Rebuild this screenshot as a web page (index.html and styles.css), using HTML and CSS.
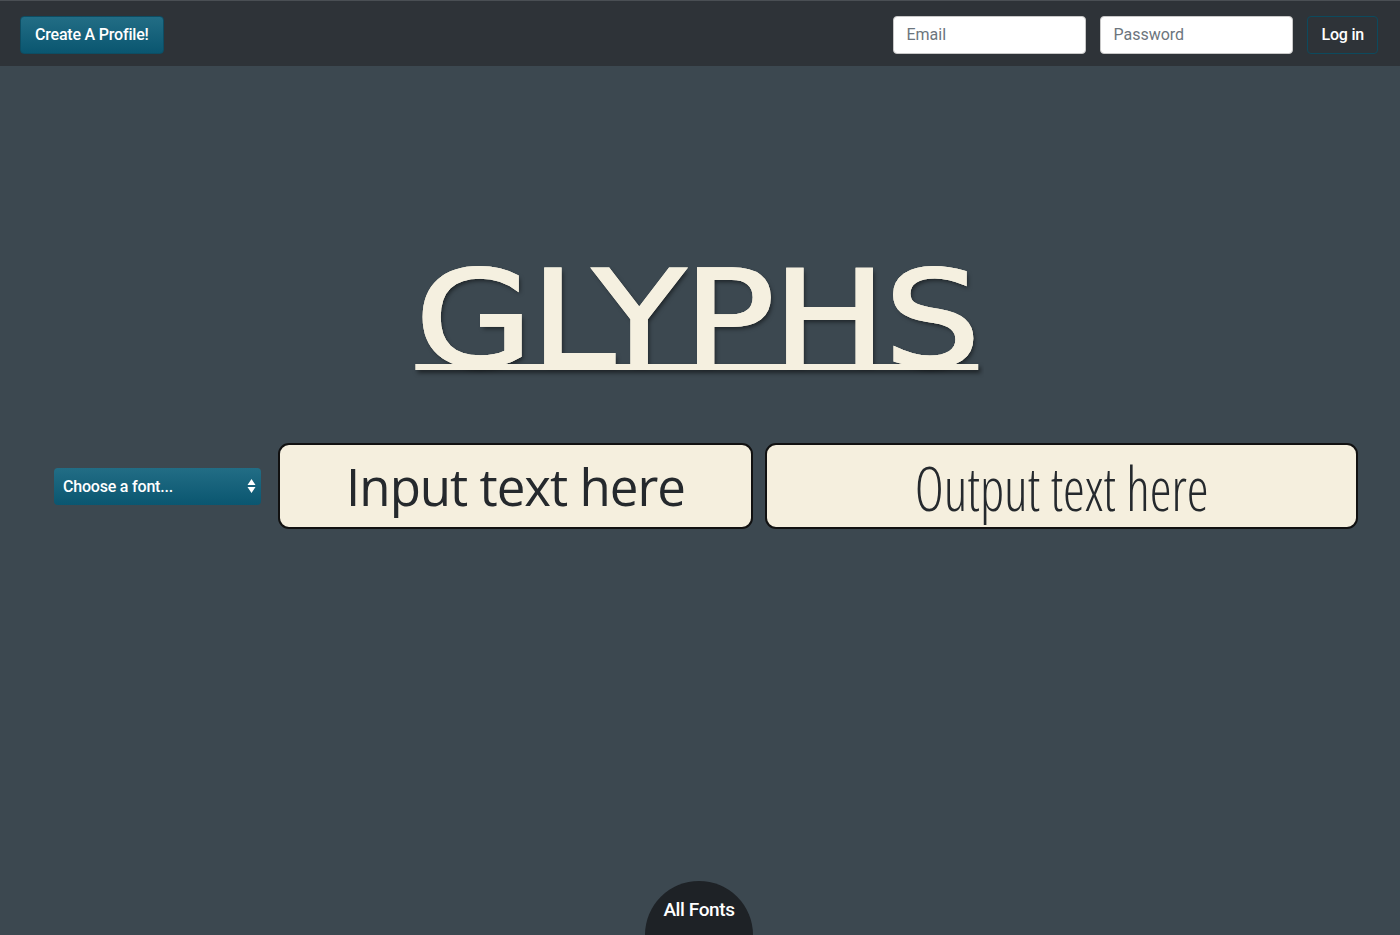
FILE: index.html
```html
<!DOCTYPE html>
<html>
<head>
<meta charset="utf-8">
<link rel="stylesheet" href="styles.css">
</head>
<body>
<nav class="navbar">
  <button class="btn-teal">Create A Profile!</button>
  <form class="login">
    <input class="field" type="text" placeholder="Email">
    <input class="field" type="password" placeholder="Password">
    <button class="btn-outline" type="button">Log in</button>
  </form>
</nav>
<main class="main">
  <h1 class="title"><span class="title-text">GLYPHS</span></h1>
  <div class="row">
    <div class="select">
      <span>Choose a font...</span>
      <svg class="arrows" width="9" height="16" viewBox="0 0 9 16"><path d="M4.5 1 L8.5 7 H0.5 Z M4.5 15 L0.5 9 H8.5 Z" fill="#fff"/></svg>
    </div>
    <div class="box box-in"><span>Input text here</span></div>
    <div class="box box-out"><span class="cond">Output text here</span></div>
  </div>
  <div class="all-fonts">All Fonts</div>
</main>
</body>
</html>
```
FILE: styles.css
```css
html, body { margin: 0; padding: 0; }
body {
  background: #3c4850;
  font-family: Roboto, "Liberation Sans", Arial, sans-serif;
  height: 935px;
  overflow: hidden;
}
.navbar {
  height: 65px;
  background: #2e3338;
  border-top: 1px solid #4a4f54;
  display: flex;
  align-items: center;
  justify-content: space-between;
  padding: 0 22px 0 20px;
}
.btn-teal {
  height: 38px;
  padding: 0 14px;
  border: 1px solid #0d4d63;
  border-radius: 4px;
  background: linear-gradient(#226d85, #0a5670);
  color: #fff;
  font-family: Roboto, "Liberation Sans", Arial, sans-serif;
  font-weight: 500;
  font-size: 16px;
  letter-spacing: -0.2px;
  margin-top: 2px;
}
.login { display: flex; align-items: center; gap: 14px; margin-top: 2px; }
.field {
  width: 193px;
  height: 38px;
  box-sizing: border-box;
  border: 1px solid #c8c8c8;
  border-radius: 4px;
  padding: 0 12px;
  font-family: Roboto, "Liberation Sans", Arial, sans-serif;
  font-size: 16px;
  color: #495057;
  background: #fff;
}
.field::placeholder { color: #6c757d; }
.btn-outline {
  height: 38px;
  padding: 0 13px;
  border: 1px solid #0c4a5e;
  border-radius: 4px;
  background: transparent;
  color: #fff;
  font-family: Roboto, "Liberation Sans", Arial, sans-serif;
  font-weight: 500;
  font-size: 16px;
  letter-spacing: -0.2px;
}
.main { position: relative; height: 869px; overflow: hidden; }
.title {
  margin: 0;
  padding-top: 187px;
  text-align: center;
  font-weight: normal;
  line-height: 1;
}
.title-text {
  display: inline-block;
  font-family: "DejaVu Sans", sans-serif;
  font-size: 132px;
  letter-spacing: -2px;
  color: #f5f0e0;
  -webkit-text-stroke: 2px #f5f0e0;
  text-decoration: underline;
  text-decoration-skip-ink: none;
  text-decoration-thickness: 6px;
  text-underline-offset: -1px;
  text-shadow: 2px 3px 4px rgba(0,0,0,0.5);
  transform: scaleX(1.15);
  margin-left: -6px;
}
.row {
  display: flex;
  align-items: center;
  margin-top: 58px;
  padding-left: 54px;
}
.select {
  width: 207px;
  height: 37px;
  box-sizing: border-box;
  border-radius: 4px;
  background: linear-gradient(#226d85, #0a5670);
  color: #fff;
  font-size: 16px;
  font-weight: 500;
  letter-spacing: -0.2px;
  display: flex;
  align-items: center;
  justify-content: space-between;
  padding: 0 5px 0 9px;
  margin-right: 17px;
}
.box {
  height: 86px;
  box-sizing: border-box;
  border: 2px solid #111;
  border-radius: 11px;
  background: #f5efde;
  display: flex;
  align-items: center;
  justify-content: center;
  color: #25292d;
}
.box-in {
  width: 475px;
  margin-right: 12px;
  font-family: "Open Sans", sans-serif;
  font-size: 51px;
  letter-spacing: -1px;
}
.box-out {
  width: 593px;
}
.cond {
  display: inline-block;
  font-family: "Open Sans", sans-serif;
  font-weight: 300;
  font-size: 60px;
  font-stretch: condensed;
  transform: scaleX(0.92);
  margin-top: 4px;
}
.all-fonts {
  position: absolute;
  left: 645px;
  top: 815px;
  width: 108px;
  height: 108px;
  border-radius: 50%;
  background: #1e2226;
  color: #fff;
  font-size: 19px;
  font-weight: 500;
  letter-spacing: -0.4px;
  text-align: center;
  padding-top: 17px;
  box-sizing: border-box;
}
```
